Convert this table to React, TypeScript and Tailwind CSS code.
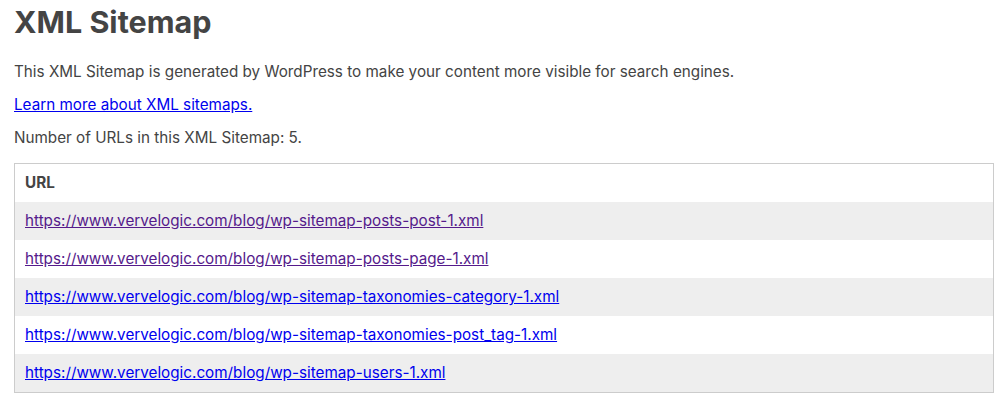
const urls = [
  { href: 'https://www.vervelogic.com/blog/wp-sitemap-posts-post-1.xml', visited: true },
  { href: 'https://www.vervelogic.com/blog/wp-sitemap-posts-page-1.xml', visited: true },
  { href: 'https://www.vervelogic.com/blog/wp-sitemap-taxonomies-category-1.xml', visited: false },
  { href: 'https://www.vervelogic.com/blog/wp-sitemap-taxonomies-post_tag-1.xml', visited: false },
  { href: 'https://www.vervelogic.com/blog/wp-sitemap-users-1.xml', visited: false },
];

export default function App() {
  return (
    <div className="min-h-[397px] bg-white pl-[14px] text-[#444] font-['Inter','Liberation_Sans',sans-serif]">
      <div className="w-[980px]">
        <h1 className="pt-[3px] text-[30.5px] leading-[38px] font-bold">XML Sitemap</h1>
        <p className="mt-[21px] text-[15.25px] leading-[20px]">
          This XML Sitemap is generated by WordPress to make your content more visible for search engines.
        </p>
        <p className="mt-[13px] text-[15.25px] leading-[20px]">
          <a href="#" className="text-[#0000ee] underline">
            Learn more about XML sitemaps.
          </a>
        </p>
        <p className="mt-[13px] text-[15.25px] leading-[20px]">Number of URLs in this XML Sitemap: 5.</p>
        <table className="mt-[15px] w-full border border-[#ccc] border-collapse text-[15.25px] leading-[18px]">
          <thead>
            <tr>
              <th className="p-[10px] text-left font-bold">URL</th>
            </tr>
          </thead>
          <tbody>
            {urls.map((u, i) => (
              <tr key={u.href}>
                <td className={i % 2 === 0 ? 'p-[10px] bg-[#eee]' : 'p-[10px]'}>
                  <a
                    href="#"
                    className={u.visited ? 'text-[#551a8b] underline' : 'text-[#0000ee] underline'}
                  >
                    {u.href}
                  </a>
                </td>
              </tr>
            ))}
          </tbody>
        </table>
      </div>
    </div>
  );
}
